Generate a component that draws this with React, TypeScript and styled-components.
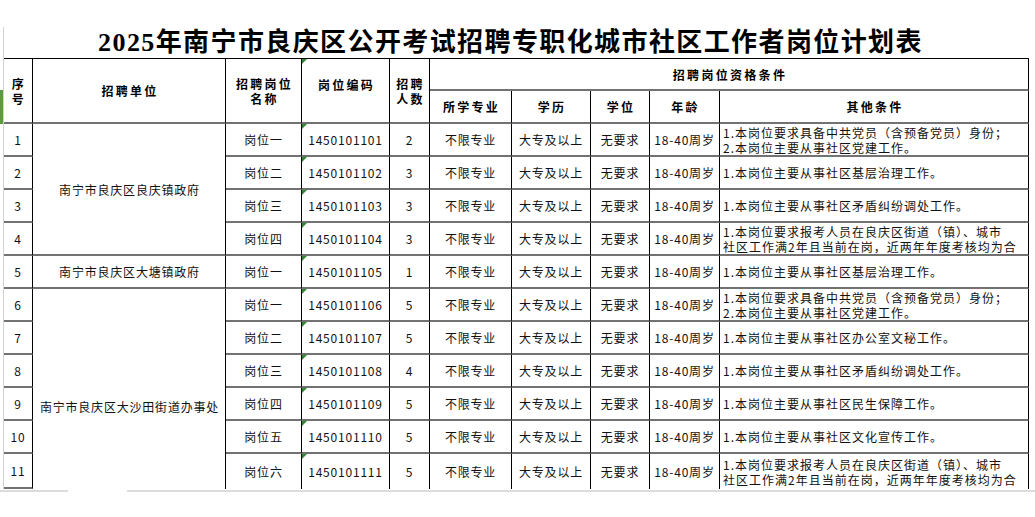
import React from "react";
import styled, { createGlobalStyle } from "styled-components";

const GlobalStyle = createGlobalStyle`
  html, body { margin: 0; padding: 0; background: #fff; }
  body { font-family: "Noto Sans CJK SC", "Noto Sans", sans-serif; color: #111; }
  * { box-sizing: border-box; }
`;

const Page = styled.div`
  position: relative;
  width: 1035px;
  height: 517px;
  overflow: hidden;
  background: #fff;
  padding-top: 27px;
`;

const RowMarker = styled.div`
  position: absolute;
  left: 0;
  top: 90px;
  width: 3px;
  height: 34px;
  background: #5b9d3e;
`;

const Sheet = styled.div`
  margin-left: 3px;
  width: 1026px;
  border-left: 1px solid #d2d2d2;
`;

const Title = styled.h1`
  margin: 0;
  height: 31px;
  line-height: 31px;
  padding-right: 12px;
  text-align: center;
  font-family: "Liberation Serif", "Noto Sans CJK SC", serif;
  font-weight: 700;
  font-size: 26px;
  color: #000;
  letter-spacing: 1.4px;
  white-space: nowrap;
`;

const Grid = styled.div`
  display: grid;
  grid-template-columns: 29px 193px 76px 88px 40px 82px 79px 59px 70px 309px;
  grid-template-rows: 32px 33px repeat(10, 33px) 35px;
  border-top: 1px solid #000;
`;

const Cell = styled.div<{ $rows?: number; $cols?: number; $noBottom?: boolean }>`
  position: relative;
  display: flex;
  align-items: center;
  justify-content: center;
  overflow: hidden;
  white-space: nowrap;
  border-right: 1px solid #000;
  border-bottom: ${(p) => (p.$noBottom ? "none" : "2px solid #727272")};
  grid-row: ${(p) => (p.$rows ? `span ${p.$rows}` : "auto")};
  grid-column: ${(p) => (p.$cols ? `span ${p.$cols}` : "auto")};
  font-size: 12px;
  letter-spacing: 0.8px;
  color: #111;
`;

const HeadCell = styled(Cell)<{ $lift?: boolean }>`
  flex-direction: column;
  font-weight: 700;
  letter-spacing: 2.3px;
  padding-left: 2px;
  line-height: 15px;
  color: #000;
  padding-bottom: ${(p) => (p.$lift ? "13px" : "0")};
`;

const UnitCell = styled(Cell)<{ $offset?: number }>`
  padding-top: ${(p) => (p.$offset ? `${p.$offset}px` : "0")};
  padding-left: 1px;
`;

const OtherCell = styled(Cell)`
  flex-direction: column;
  align-items: flex-start;
  justify-content: center;
  padding-left: 3px;
  line-height: 15px;
  letter-spacing: 1px;
`;

const Line = styled.span`
  display: block;
`;

const Flag = styled.span`
  position: absolute;
  top: 0;
  left: 0;
  width: 0;
  height: 0;
  border-top: 5px solid #2e8b2e;
  border-right: 5px solid transparent;
`;

const Footer = styled.div`
  display: flex;
  margin-top: 1px;
  height: 2px;
`;

const FooterSeg = styled.div<{ $w?: number; $gap?: boolean }>`
  width: ${(p) => (p.$w ? `${p.$w}px` : "auto")};
  flex: ${(p) => (p.$w ? "none" : "1")};
  background: ${(p) => (p.$gap ? "transparent" : "#dcdcdc")};
`;

type Row = {
  seq: number;
  name: string;
  code: string;
  count: number;
  other: string[];
};

const party = ["1.本岗位要求具备中共党员（含预备党员）身份；", "2.本岗位主要从事社区党建工作。"];
const exp = ["1.本岗位要求报考人员在良庆区街道（镇）、城市", "社区工作满2年且当前在岗，近两年年度考核均为合"];

const groups: { unit: string; offset?: number; rows: Row[] }[] = [
  {
    unit: "南宁市良庆区良庆镇政府",
    rows: [
      { seq: 1, name: "岗位一", code: "1450101101", count: 2, other: party },
      { seq: 2, name: "岗位二", code: "1450101102", count: 3, other: ["1.本岗位主要从事社区基层治理工作。"] },
      { seq: 3, name: "岗位三", code: "1450101103", count: 3, other: ["1.本岗位主要从事社区矛盾纠纷调处工作。"] },
      { seq: 4, name: "岗位四", code: "1450101104", count: 3, other: exp },
    ],
  },
  {
    unit: "南宁市良庆区大塘镇政府",
    rows: [{ seq: 5, name: "岗位一", code: "1450101105", count: 1, other: ["1.本岗位主要从事社区基层治理工作。"] }],
  },
  {
    unit: "南宁市良庆区大沙田街道办事处",
    offset: 34,
    rows: [
      { seq: 6, name: "岗位一", code: "1450101106", count: 5, other: party },
      { seq: 7, name: "岗位二", code: "1450101107", count: 5, other: ["1.本岗位主要从事社区办公室文秘工作。"] },
      { seq: 8, name: "岗位三", code: "1450101108", count: 4, other: ["1.本岗位主要从事社区矛盾纠纷调处工作。"] },
      { seq: 9, name: "岗位四", code: "1450101109", count: 5, other: ["1.本岗位主要从事社区民生保障工作。"] },
      { seq: 10, name: "岗位五", code: "1450101110", count: 5, other: ["1.本岗位主要从事社区文化宣传工作。"] },
      { seq: 11, name: "岗位六", code: "1450101111", count: 5, other: exp },
    ],
  },
];

const LAST = 11;

export default function App() {
  return (
    <>
      <GlobalStyle />
      <Page>
        <RowMarker />
        <Sheet>
          <Title>2025年南宁市良庆区公开考试招聘专职化城市社区工作者岗位计划表</Title>
          <Grid>
            <HeadCell $rows={2}>
              <Line>序</Line>
              <Line>号</Line>
            </HeadCell>
            <HeadCell $rows={2}>招聘单位</HeadCell>
            <HeadCell $rows={2}>
              <Line>招聘岗位</Line>
              <Line>名称</Line>
            </HeadCell>
            <HeadCell $rows={2} $lift>
              <Flag />
              岗位编码
            </HeadCell>
            <HeadCell $rows={2}>
              <Line>招聘</Line>
              <Line>人数</Line>
            </HeadCell>
            <HeadCell $cols={5}>招聘岗位资格条件</HeadCell>
            <HeadCell>所学专业</HeadCell>
            <HeadCell>学历</HeadCell>
            <HeadCell>学位</HeadCell>
            <HeadCell>年龄</HeadCell>
            <HeadCell>其他条件</HeadCell>

            {groups.map((g) =>
              g.rows.map((r, i) => {
                const last = r.seq === LAST;
                return (
                  <React.Fragment key={r.seq}>
                    <Cell>{r.seq}</Cell>
                    {i === 0 && (
                      <UnitCell $rows={g.rows.length} $offset={g.offset} $noBottom={!!g.offset}>
                        {g.unit}
                      </UnitCell>
                    )}
                    <Cell $noBottom={last}>{r.name}</Cell>
                    <Cell $noBottom={last}>
                      <Flag />
                      {r.code}
                    </Cell>
                    <Cell $noBottom={last}>{r.count}</Cell>
                    <Cell $noBottom={last}>不限专业</Cell>
                    <Cell $noBottom={last}>大专及以上</Cell>
                    <Cell $noBottom={last}>无要求</Cell>
                    <Cell $noBottom={last}>18-40周岁</Cell>
                    <OtherCell $noBottom={last}>
                      {r.other.map((t) => (
                        <Line key={t}>{t}</Line>
                      ))}
                    </OtherCell>
                  </React.Fragment>
                );
              })
            )}
          </Grid>
        </Sheet>
        <Footer>
          <FooterSeg $w={68} />
          <FooterSeg $w={59} $gap />
          <FooterSeg />
        </Footer>
      </Page>
    </>
  );
}
